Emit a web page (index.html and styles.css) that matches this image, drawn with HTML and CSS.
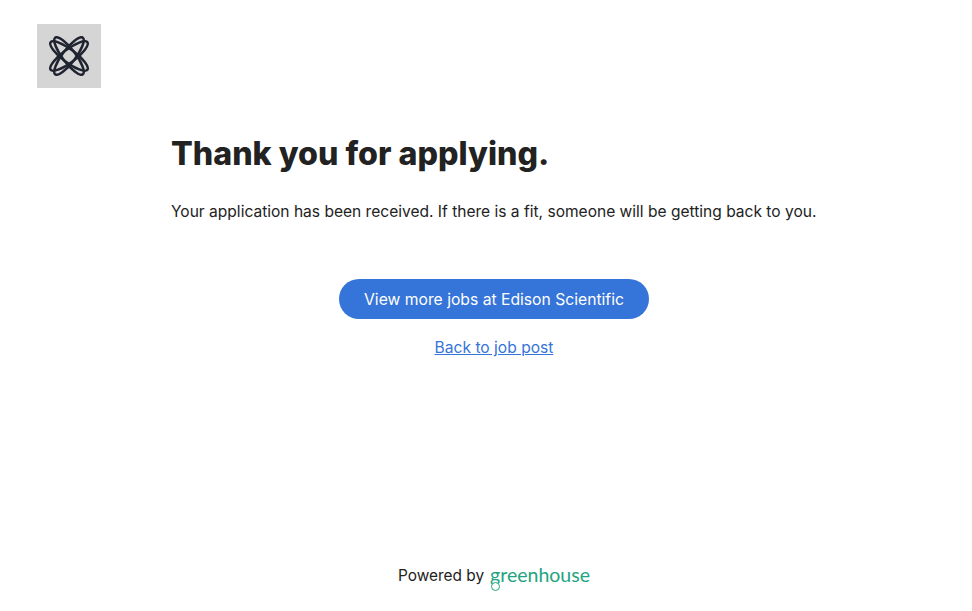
FILE: index.html
```html
<!DOCTYPE html>
<html lang="en">
<head>
    <meta charset="UTF-8">
    <meta name="viewport" content="width=device-width, initial-scale=1.0">
    <title>Thank you for applying</title>
    <link rel="stylesheet" href="styles.css">
</head>
<body>
    <header class="header">
        <div class="logo">
            <svg width="40" height="40" viewBox="0 0 40 40" fill="none" stroke="#1f2430" stroke-width="2.5">
                <ellipse cx="20" cy="20" rx="6.5" ry="23" transform="rotate(37 20 20)"/>
                <ellipse cx="20" cy="20" rx="6.5" ry="23" transform="rotate(-37 20 20)"/>
                <ellipse cx="20" cy="20" rx="6.5" ry="23" transform="rotate(53 20 20)"/>
                <ellipse cx="20" cy="20" rx="6.5" ry="23" transform="rotate(-53 20 20)"/>
            </svg>
        </div>
    </header>

    <main class="content">
        <h1>Thank you for applying.</h1>
        <p>Your application has been received. If there is a fit, someone will be getting back to you.</p>
        <div class="actions">
            <a class="button" href="#">View more jobs at Edison Scientific</a>
            <a class="back" href="#">Back to job post</a>
        </div>
    </main>

    <footer class="footer">
        <span>Powered by</span>
        <span class="greenhouse"><span class="g-letter">g</span>reenhouse</span>
    </footer>
</body>
</html>
```

FILE: styles.css
```css
body {
    margin: 0;
    height: 611px;
    display: flex;
    flex-direction: column;
    background: #fff;
    color: #222;
    font-family: "Inter", "Liberation Sans", sans-serif;
    font-size: 16px;
}

.header {
    padding: 24px 37px 0;
}

.logo {
    width: 64px;
    height: 64px;
    background: #d5d5d5;
    display: flex;
    align-items: center;
    justify-content: center;
}

.content {
    flex: 1;
    width: 646px;
    margin-left: 171px;
}

h1 {
    margin: 46px 0 0;
    font-size: 32.2px;
    line-height: 40px;
    font-weight: 800;
}

p {
    margin: 26px 0 0;
    line-height: 24px;
    font-size: 15.55px;
}

.actions {
    margin-top: 55px;
    display: flex;
    flex-direction: column;
    align-items: center;
    gap: 17px;
}

.button {
    background: #3574d8;
    color: #fff;
    text-decoration: none;
    height: 40px;
    line-height: 41px;
    padding: 0 24.75px;
    border-radius: 20px;
    font-size: 15.7px;
}

.back {
    color: #3574d8;
    font-size: 15.6px;
    line-height: 24px;
}

.footer {
    display: flex;
    justify-content: center;
    align-items: center;
    gap: 6px;
    padding: 0 0 24px 16px;
    font-size: 15.4px;
}

.greenhouse {
    color: #23a47f;
    font-size: 19.5px;
    font-family: "Lato", sans-serif;
    position: relative;
    top: -1px;
}

/* loop under the g of the wordmark */
.g-letter {
    position: relative;
}

.g-letter::after {
    content: "";
    position: absolute;
    left: 1px;
    top: 19px;
    width: 7px;
    height: 7px;
    border: 1.5px solid #23a47f;
    border-radius: 50%;
    background: #fff;
}
```
